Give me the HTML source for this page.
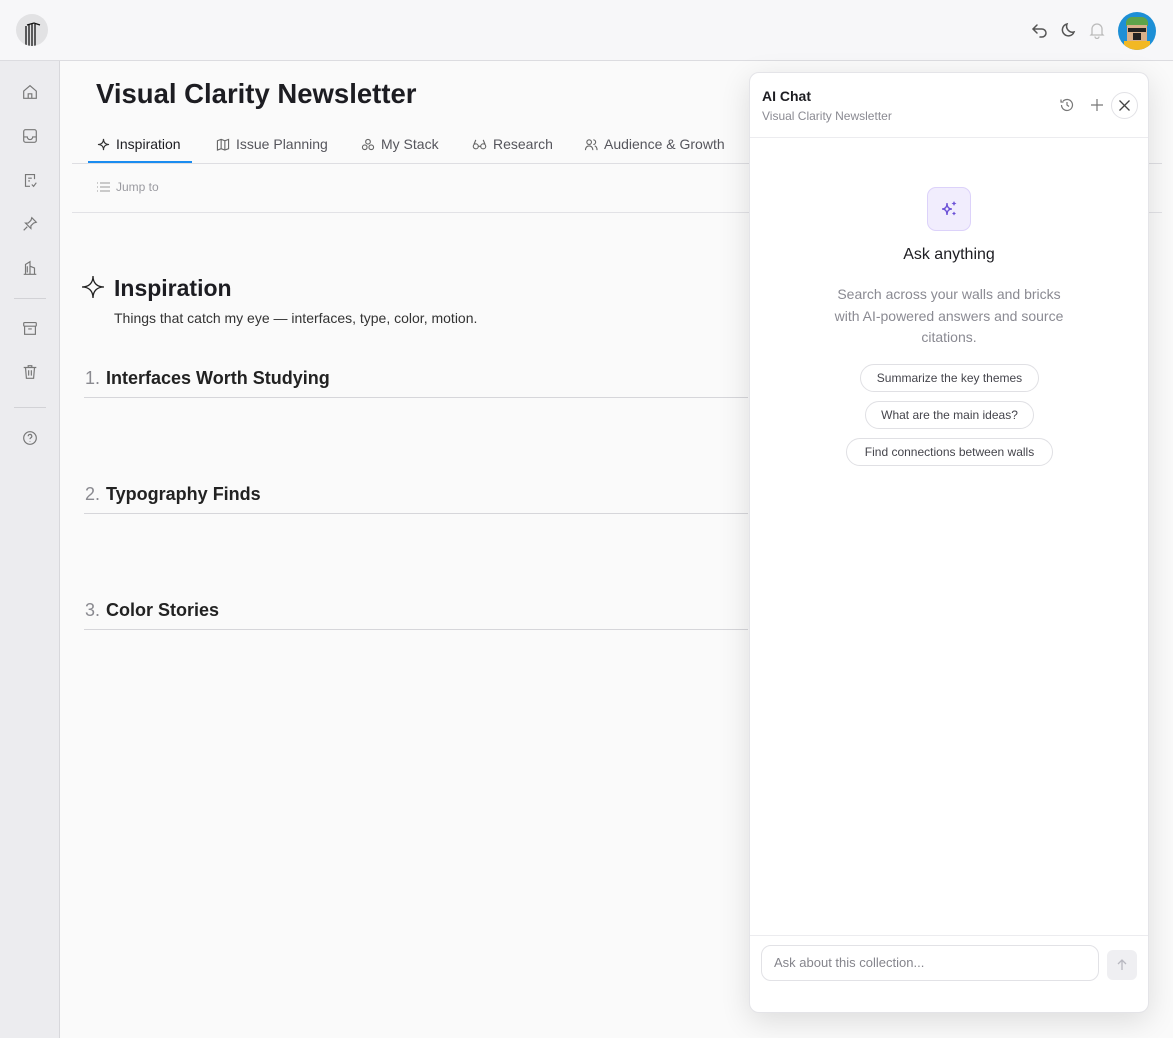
<!DOCTYPE html>
<html><head><meta charset="utf-8"><style>
*{box-sizing:border-box;margin:0;padding:0}
body{width:1173px;height:1038px;overflow:hidden;background:#fafafa;font-family:"Liberation Sans",sans-serif;color:#1d1d22;position:relative}
.abs{position:absolute}
.top{left:0;top:0;width:1173px;height:61px;background:#f7f7f9;border-bottom:1px solid #dcdce0}
.side{left:0;top:61px;width:60px;height:977px;background:#ececef;border-right:1px solid #d8d8dc}
.ic{position:absolute;left:21px;width:18px;height:18px}
svg{display:block}
.tab{position:absolute;top:136px;font-size:14px;color:#55555c;display:flex;align-items:center;gap:6px}
.sec{position:absolute;left:84px;width:664px;border-bottom:1px solid #d6d6da;height:30px;font-size:18px;font-weight:bold;color:#222}
.sec span{color:#8a8a90;font-weight:normal;margin-right:6px;margin-left:1px}
.panel{left:749px;top:72px;width:400px;height:941px;background:#fff;border:1px solid #e4e4e8;border-radius:10px;box-shadow:0 8px 30px rgba(0,0,0,.12)}
.chip{position:absolute;height:28px;border:1px solid #e0e0e4;border-radius:14px;font-size:12px;color:#45454c;line-height:26px;text-align:center}
</style></head><body>
<div class="abs top"></div>
<div class="abs" style="left:16px;top:14px;width:32px;height:32px;border-radius:50%;background:#e2e2e4;overflow:hidden">
<svg width="32" height="32"><g stroke="#111" stroke-width="1.3" fill="none"><path d="M10 32V12M13 32V10M16 32V10M19 32V10"/><path d="M11 11L18 9L24 11"/></g></svg></div>
<svg class="abs" style="left:1031px;top:21px" width="18" height="18" fill="none" stroke="#555" stroke-width="1.5" stroke-linecap="round"><path d="M6 4L2 8l4 4M2 8h9a4 4 0 010 8h-2"/></svg>
<svg class="abs" style="left:1060px;top:21px" width="18" height="18" fill="none" stroke="#555" stroke-width="1.5"><path d="M14 11A6 6 0 017 3a6 6 0 107 8z"/></svg>
<svg class="abs" style="left:1089px;top:21px" width="16" height="18" fill="none" stroke="#bbb" stroke-width="1.3"><path d="M3 13V8a5 5 0 0110 0v5l1 1H2zM6 15.5a2 2 0 004 0"/></svg>
<div class="abs" style="left:1118px;top:12px;width:38px;height:38px;border-radius:50%;background:#1d8fd6;overflow:hidden">
<div class="abs" style="left:8px;top:5px;width:22px;height:9px;background:#5ea34a;border-radius:6px 6px 0 0"></div>
<div class="abs" style="left:9px;top:13px;width:20px;height:16px;background:#d9b08a"></div>
<div class="abs" style="left:10px;top:16px;width:18px;height:4px;background:#222"></div>
<div class="abs" style="left:15px;top:21px;width:8px;height:7px;background:#222"></div>
<div class="abs" style="left:6px;top:29px;width:26px;height:10px;background:#f2b824"></div>
</div>
<div class="abs side"></div>
<svg class="ic" style="top:83px" viewBox="0 0 20 20" fill="none" stroke="#777" stroke-width="1.3"><path d="M3 9l7-6 7 6v8H3z M8 17v-5h4v5"/></svg>
<svg class="ic" style="top:127px" viewBox="0 0 20 20" fill="none" stroke="#777" stroke-width="1.3"><rect x="3" y="3" width="14" height="14" rx="2"/><path d="M3 11h4a3 3 0 006 0h4"/></svg>
<svg class="ic" style="top:171px" viewBox="0 0 20 20" fill="none" stroke="#777" stroke-width="1.3"><path d="M15 9V4H5v13h5M8 8h4M8 11h2M12 15l2 2 3-4"/></svg>
<svg class="ic" style="top:215px" viewBox="0 0 20 20" fill="none" stroke="#777" stroke-width="1.3"><path d="M12 3l5 5-3 1-3 3 0 3-6-6 3 0 3-3zM7 13l-4 4"/></svg>
<svg class="ic" style="top:259px" viewBox="0 0 20 20" fill="none" stroke="#777" stroke-width="1.3"><path d="M3 17h14M5 17V6l5-3v14M10 8l5 2v7M7 8v7"/></svg>
<div class="abs" style="left:14px;top:298px;width:32px;height:1px;background:#d2d2d6"></div>
<svg class="ic" style="top:319px" viewBox="0 0 20 20" fill="none" stroke="#777" stroke-width="1.3"><rect x="3" y="4" width="14" height="4" rx="1"/><path d="M4 8v9h12V8M8 11h4"/></svg>
<svg class="ic" style="top:363px" viewBox="0 0 20 20" fill="none" stroke="#777" stroke-width="1.3"><path d="M3 5h14M8 5V3h4v2M5 5l1 12h8l1-12M8.5 8v6M11.5 8v6"/></svg>
<div class="abs" style="left:14px;top:407px;width:32px;height:1px;background:#d2d2d6"></div>
<svg class="ic" style="top:429px" viewBox="0 0 20 20" fill="none" stroke="#777" stroke-width="1.3"><circle cx="10" cy="10" r="7"/><path d="M8 8a2 2 0 113 1.7c-.7.4-1 .8-1 1.5M10 13.5v.5"/></svg>

<div class="abs" style="left:96px;top:78px;font-size:27.5px;font-weight:bold">Visual Clarity Newsletter</div>
<div class="tab" style="left:97px;color:#1d1d22"><svg width="13" height="13" viewBox="0 0 14 14" fill="none" stroke="#333" stroke-width="1.2"><path d="M7 1C7 5 9 7 13 7 9 7 7 9 7 13 7 9 5 7 1 7 5 7 7 5 7 1z"/></svg>Inspiration</div>
<div class="tab" style="left:216px"><svg width="14" height="13" viewBox="0 0 14 14" fill="none" stroke="#666" stroke-width="1.2"><path d="M1 3l4-1.5 4 1.5 4-1.5v10L9 13 5 11.5 1 13zM5 1.5v10M9 3v10"/></svg>Issue Planning</div>
<div class="tab" style="left:361px"><svg width="14" height="13" viewBox="0 0 14 14" fill="none" stroke="#666" stroke-width="1.2"><circle cx="7" cy="4" r="2.5"/><circle cx="3.5" cy="10" r="2.5"/><circle cx="10.5" cy="10" r="2.5"/></svg>My Stack</div>
<div class="tab" style="left:472px"><svg width="15" height="13" viewBox="0 0 16 14" fill="none" stroke="#666" stroke-width="1.2"><circle cx="4" cy="9" r="2.7"/><circle cx="12" cy="9" r="2.7"/><path d="M6.7 9h2.6M2 7l2-5M14 7l-2-5"/></svg>Research</div>
<div class="tab" style="left:584px"><svg width="14" height="13" viewBox="0 0 14 14" fill="none" stroke="#666" stroke-width="1.2"><circle cx="5" cy="4.5" r="2.5"/><path d="M1 13c0-3 2-4.5 4-4.5s4 1.5 4 4.5M9.5 2a2.5 2.5 0 010 5M11 8.5c1.5.5 2.5 2 2.5 4.5"/></svg>Audience &amp; Growth</div>
<div class="abs" style="left:72px;top:163px;width:1090px;height:1px;background:#dedee2"></div>
<div class="abs" style="left:88px;top:161px;width:104px;height:2px;background:#1a8cf0"></div>
<div class="abs" style="left:96px;top:180px;font-size:12px;color:#9a9aa0;display:flex;gap:6px;align-items:center"><svg width="14" height="12" viewBox="0 0 14 12" fill="none" stroke="#999" stroke-width="1.1"><path d="M4 2h10M4 6h10M4 10h10M1 2h1M1 6h1M1 10h1"/></svg>Jump to</div>
<div class="abs" style="left:72px;top:212px;width:1090px;height:1px;background:#e2e2e6"></div>

<svg class="abs" style="left:81px;top:275px" width="24" height="24" viewBox="0 0 24 24" fill="none" stroke="#222" stroke-width="1.3"><path d="M12 1C12 8 16 12 23 12 16 12 12 16 12 23 12 16 8 12 1 12 8 12 12 8 12 1z"/></svg>
<div class="abs" style="left:114px;top:275px;font-size:23px;font-weight:bold">Inspiration</div>
<div class="abs" style="left:114px;top:310px;font-size:14px;color:#333">Things that catch my eye — interfaces, type, color, motion.</div>
<div class="sec" style="top:368px"><span>1.</span>Interfaces Worth Studying</div>
<div class="sec" style="top:484px"><span>2.</span>Typography Finds</div>
<div class="sec" style="top:600px"><span>3.</span>Color Stories</div>

<div class="abs panel">
<div class="abs" style="left:12px;top:15px;font-size:14px;font-weight:bold">AI Chat</div>
<div class="abs" style="left:12px;top:36px;font-size:12px;color:#8a8a92">Visual Clarity Newsletter</div>
<svg class="abs" style="left:309px;top:24px" width="16" height="16" viewBox="0 0 16 16" fill="none" stroke="#777" stroke-width="1.2"><path d="M2.5 8a5.5 5.5 0 101.6-3.9M2 2.5v2.5h2.5M8 5v3l2 1.5"/></svg>
<svg class="abs" style="left:340px;top:25px" width="14" height="14" fill="none" stroke="#777" stroke-width="1.2"><path d="M7 1v12M1 7h12"/></svg>
<div class="abs" style="left:361px;top:19px;width:27px;height:27px;border:1px solid #e2e2e6;border-radius:50%"><svg style="margin:6px" width="13" height="13" fill="none" stroke="#444" stroke-width="1.3"><path d="M1.5 1.5l10 10M11.5 1.5l-10 10"/></svg></div>
<div class="abs" style="left:0;top:64px;width:398px;height:1px;background:#ececef"></div>
<div class="abs" style="left:177px;top:114px;width:44px;height:44px;border-radius:9px;background:#f1edfd;border:1px solid #dcd2fa"><svg style="margin:11px" width="20" height="20" viewBox="0 0 20 20" fill="#6a4fd6"><path d="M8 4C8 8 9.5 10 13 10 9.5 10 8 12 8 16 8 12 6.5 10 3 10 6.5 10 8 8 8 4z" fill="none" stroke="#6a4fd6" stroke-width="1.3"/><path d="M15 2l.8 1.7 1.7.8-1.7.8L15 7l-.8-1.7-1.7-.8 1.7-.8zM15 12.5l.7 1.3 1.3.7-1.3.7-.7 1.3-.7-1.3-1.3-.7 1.3-.7z"/></svg></div>
<div class="abs" style="left:0;width:398px;top:173px;text-align:center;font-size:16px">Ask anything</div>
<div class="abs" style="left:78px;width:242px;top:211px;text-align:center;font-size:14px;line-height:21.5px;color:#8a8a92">Search across your walls and bricks with AI-powered answers and source citations.</div>
<div class="chip" style="left:110px;top:291px;width:179px">Summarize the key themes</div>
<div class="chip" style="left:115px;top:328px;width:169px">What are the main ideas?</div>
<div class="chip" style="left:96px;top:365px;width:207px">Find connections between walls</div>
<div class="abs" style="left:0;top:862px;width:398px;height:1px;background:#ececef"></div>
<div class="abs" style="left:11px;top:872px;width:338px;height:36px;border:1px solid #e2e2e6;border-radius:10px;font-size:13px;color:#85858c;padding:9px 12px">Ask about this collection...</div>
<div class="abs" style="left:357px;top:877px;width:30px;height:30px;background:#efeff2;border-radius:6px"><svg style="margin:8px" width="14" height="14" fill="none" stroke="#b8b8c0" stroke-width="1.3"><path d="M7 12V2M3 6l4-4 4 4"/></svg></div>
</div>
</body></html>
